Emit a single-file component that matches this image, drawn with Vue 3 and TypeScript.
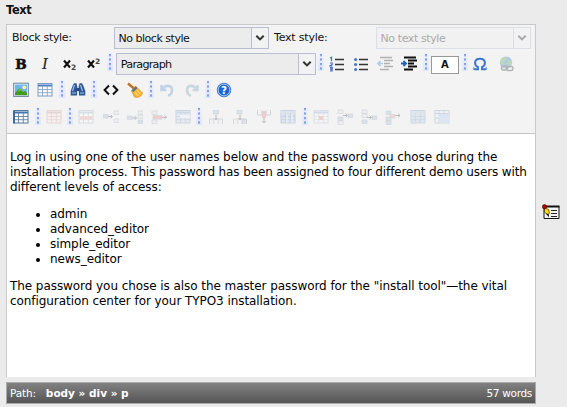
<script setup lang="ts">
interface Tool { name: string; off?: boolean }

const table = (head: string, line: string, fill: string) =>
  `<rect x="1" y="1.5" width="14" height="12.5" fill="${fill}" stroke="${line}"/><path d="M1 2.5h14v2H1z" fill="${head}"/><path d="M1 7.5h14M1 10.7h14M5.5 4v10M10.3 4v10" stroke="${line}" stroke-width=".8" fill="none"/>`

const box = (x: number, y: number, color = '#a9bfdd', w = 5) =>
  `<rect x="${x}" y="${y}" width="${w}" height="3.6" fill="${color}" stroke="#8c9bb0" stroke-width=".6"/>`

const arrow = (x: number, y: number) =>
  `<path d="M${x} ${y}h4.5m-2-1.8 2 1.8-2 1.8" stroke="#555" fill="none"/>`

const down = '<path d="M8 6v5m-1.8-2L8 11l1.8-2" stroke="#555" fill="none"/>'

const icons: Record<string, string> = {
  bold: '<text x="8" y="12.7" text-anchor="middle" font-family="DejaVu Serif,serif" font-weight="700" font-size="13.5" fill="#111" stroke="#111" stroke-width=".6">B</text>',
  italic: '<text x="8" y="12.7" text-anchor="middle" font-family="DejaVu Serif,serif" font-style="italic" font-size="14" fill="#222" stroke="#222" stroke-width=".2">I</text>',
  sub: '<path d="m2 4.5 6 7m0-7-6 7" stroke="#111" stroke-width="2.1"/><text x="9" y="14" font-family="DejaVu Sans,sans-serif" font-size="7.5" font-weight="700" fill="#444">2</text>',
  sup: '<path d="m2 4.5 6 7m0-7-6 7" stroke="#111" stroke-width="2.1"/><text x="9" y="8" font-family="DejaVu Sans,sans-serif" font-size="7.5" font-weight="700" fill="#444">2</text>',
  ordered: '<path d="M6 3.5h9M6 8.5h9M6 13.5h9" stroke="#333" stroke-width="1.4"/><path d="M1 2l1.5-.7v4M1 7h2.2v1.2L1 10h2.5M1 11.6h2.2v3.2H1m0-1.6h2" stroke="#4773c4" stroke-width="1.2" fill="none"/>',
  bullets: '<path d="M6 3.5h9M6 8.5h9M6 13.5h9" stroke="#333" stroke-width="1.4"/><g fill="#4773c4"><circle cx="2.6" cy="3.5" r="1.5"/><circle cx="2.6" cy="8.5" r="1.5"/><circle cx="2.6" cy="13.5" r="1.5"/></g>',
  outdent: '<path d="M3 1.5h12M7 4.5h9M7 7.5h6M7 10.5h9M3 13.5h9" stroke="#333" stroke-width="1.5"/><path d="M6 7.5H1M3.5 5 1 7.5 3.5 10" stroke="#2f83c9" stroke-width="1.7" fill="none"/>',
  indent: '<path d="M3 1.5h12M7 4.5h9M7 7.5h6M7 10.5h9M3 13.5h9" stroke="#111" stroke-width="1.8"/><path d="M0 7.5h5M2.5 5 5 7.5 2.5 10" stroke="#2261bd" stroke-width="1.8" fill="none"/>',
  omega: '<path d="M2 13.2h4v-2C1.800 9 1.800 2.800 8 2.800s6.200 6.200 2 8.400v2h4" fill="none" stroke="#3f76d0" stroke-width="2"/><path d="M1.700 14v-3M14.300 14v-3" stroke="#5d93e4" stroke-width="1"/>',
  globe: '<circle cx="8" cy="6.600" r="6.200" fill="#72a9d5"/><path d="M4 2q4-2 5 1L6 5l1 3-3 1-2-3zm7 2 3 2-2 4-3-2z" fill="#8ac078"/><rect x="3.500" y="10" width="6" height="4" rx="2" fill="none" stroke="#777" stroke-width="1.400"/><rect x="8.500" y="10.500" width="6.500" height="4" rx="2" fill="none" stroke="#777" stroke-width="1.400"/>',
  image: '<rect x=".7" y="1.2" width="14.6" height="13.2" fill="#f5faff" stroke="#6b8295"/><path d="M2 2.5h12v10.7H2z" fill="#6eb5ed"/><circle cx="11.3" cy="5.3" r="1.9" fill="#fff2a0"/><path d="M2 11l4.5-5 4 4 1.5-1 2 2v2.2H2z" fill="#419a1e"/><path d="m6.5 6 3 3.5-3-1-2 2z" fill="#77c43c"/>',
  table: table('#4f7ec4', '#7c9ebf', '#f7fbff'),
  find: '<path d="M2.5 4 4 1.3h2.5L7.4 5 7 13.5H.7V9zM13.5 4 12 1.3H9.5L8.6 5 9 13.5h6.3V9z" fill="#305b99"/><path d="M6 6h4v3H6z" fill="#274b84"/><path d="M4.5 3 2.5 9m8-6 2 6" stroke="#9bbbe3" stroke-width="1.2"/><path d="M2 11h4m4 0h4" stroke="#7ca1d0" stroke-width="1.3"/>',
  code: '<path d="M6 3.5 1.6 8 6 12.5m4-9L14.4 8 10 12.5" fill="none" stroke="#111" stroke-width="2"/>',
  broom: '<path d="m1 1.500 6 5" stroke="#bd7429" stroke-width="2.500"/><path d="m8.500 4-4 5 3 6c4 1 7-.5 8-4z" fill="#f5b536" stroke="#d48b23" stroke-width=".7"/><path d="m8.500 4.500-4 4 2 1.500 4-4z" fill="#56758a"/><path d="m8 10 3 4m-1-6 3 4" stroke="#ffe38b"/>',
  undo: '<path d="M2.5 3v5h5M3 8c3-6 10-5 10 .2 0 3-2 5-4 5.3" stroke="#6997cf" stroke-width="2.6" fill="none"/>',
  redo: '<path d="M13.5 3v5h-5M13 8C10 2 3 3 3 8.2c0 3 2 5 4 5.3" stroke="#7ba3b8" stroke-width="2.6" fill="none"/>',
  help: '<circle cx="8" cy="8" r="6.8" fill="#1e67d0" stroke="#3d78c5"/><circle cx="8" cy="8" r="5.9" fill="none" stroke="#b9d8ff" stroke-width=".9"/><text x="8" y="11.8" text-anchor="middle" font-family="DejaVu Sans,sans-serif" font-size="10.5" font-weight="700" fill="#fff">?</text>',
  grid: table('#4773af', '#55779a', '#f7fbff') + '<path d="M1 1.5v13" stroke="#365f91" stroke-width="1.7"/>',
  redgrid: table('#c3a4a4', '#cba5a1', '#ffe9e5'),
  row: table('#9fb6ce', '#a8b5c2', '#fff') + '<path d="M2 7.3h12v3.3H2z" fill="#eaa39f"/>',
  rowBefore: box(0, 5.5) + arrow(5, 7.5) + box(11, 2, '#e4e4e4') + box(11, 10, '#e4e4e4'),
  rowAfter: box(0, 7) + arrow(5, 9) + box(11, 2, '#e4e4e4') + box(11, 6, '#e4e4e4') + box(11, 11),
  rowDelete: box(1, 2, '#e4e4e4') + box(1, 11, '#e4e4e4') + box(2, 6.5, '#e28883', 9) + arrow(11, 8.3),
  rowSplit: table('#87a8cf', '#879eb9', '#cbdcf1') + '<path d="M5 6h10v3H5z" fill="#e8f3ff"/>',
  colBefore: box(5.5, 1.5) + down + '<path d="M1.5 15v-5H6v5m4 0v-5h4.5v5" fill="#e8edf1" stroke="#8c9bb0" stroke-width=".8"/>',
  colAfter: box(5, 1.5) + down + '<path d="M1.5 15v-5H6v5" fill="#e8edf1" stroke="#999" stroke-width=".8"/><path d="M10 15v-5h4.5v5" fill="#a9bfdd" stroke="#8c9bb0"/>',
  colDelete: '<path d="M1.5 1v5H6V1m4 0v5h4.5V1" fill="#edf2f7" stroke="#8c9bb0"/><path d="M6 2h4v7H6z" fill="#db8782"/><path d="M8 9v5m-2-2 2 2 2-2" stroke="#555" fill="none"/>',
  columns: table('#b6c9dc', '#7995bd', '#b1caee') + '<path d="M7 5v9m5-9v9" stroke="#edf5ff"/>',
  cell: table('#8eafd9', '#b0bdca', '#f8fbff') + '<path d="M6 7h4v4H6z" fill="#e28e89"/>',
  cellBefore: box(1, 1, '#e4e4e4') + box(1, 8) + box(1, 12, '#e4e4e4') + arrow(6, 6.5) + box(11, 5),
  cellAfter: box(1, 1, '#e4e4e4') + box(1, 5, '#e4e4e4') + box(1, 11) + arrow(6, 8.5) + box(11, 7),
  cellDelete: box(1, 2) + box(5, 5.5, '#e4a39e') + box(1, 8) + box(1, 12) + arrow(10.5, 6.5),
  cells: table('#b7cada', '#88a3bd', '#bed1ec'),
  merged: '<rect x="1" y="1.5" width="14" height="12.500" fill="#edf5ff" stroke="#88a3bd"/><path d="M1 4.500h14M5 2v12M10 2v2M1 9h4" stroke="#88a3bd" fill="none"/><path d="M5.500 5h9v8.500h-9z" fill="#b5cdf1"/>',
}

const on = (...names: string[]): Tool[] => names.map(name => ({ name }))
const off = (...names: string[]): Tool[] => names.map(name => ({ name, off: true }))

const rows: Tool[][] = [
  [...on('image', 'table', '|', 'find', '|', 'code', 'broom', '|'), ...off('undo', 'redo'), ...on('|', 'help')],
  [...on('grid', '|'), ...off('redgrid'), ...on('|'), ...off('row', 'rowBefore', 'rowAfter', 'rowDelete', 'rowSplit'), ...on('|'), ...off('colBefore', 'colAfter', 'colDelete', 'columns'), ...on('|'), ...off('cell', 'cellBefore', 'cellAfter', 'cellDelete', 'cells', 'merged')],
]
const formats = on('bold', 'italic', 'sub', 'sup')
const lists: Tool[] = [...on('ordered', 'bullets'), ...off('outdent'), ...on('indent')]
const users = ['admin', 'advanced_editor', 'simple_editor', 'news_editor']
</script>

<template>
  <main class="page">
    <h1>Text</h1>
    <div class="field">
      <section class="editor">
        <div class="toolbar">
          <div class="styles">
            <label class="block-label">Block style:</label>
            <div class="select"><span>No block style</span><i><svg viewBox="0 0 10 8"><path d="m1.3 1.8 3.7 3.6 3.7-3.6" /></svg></i></div>
            <label class="text-label">Text style:</label>
            <div class="select disabled"><span>No text style</span><i><svg viewBox="0 0 10 8"><path d="m1.3 1.8 3.7 3.6 3.7-3.6" /></svg></i></div>
          </div>
          <div class="tools formatting">
            <span v-for="t in formats" :key="t.name" class="tool"><svg viewBox="0 0 16 16" v-html="icons[t.name]" /></span>
            <span class="sep" />
            <div class="select paragraph"><span>Paragraph</span><i><svg viewBox="0 0 10 8"><path d="m1.3 1.8 3.7 3.6 3.7-3.6" /></svg></i></div>
            <span class="sep" />
            <span v-for="t in lists" :key="t.name" class="tool" :class="{ off: t.off }"><svg viewBox="0 0 16 16" v-html="icons[t.name]" /></span>
            <span class="sep" />
            <span class="acronym">A</span>
            <span class="sep" />
            <span class="tool omega"><svg viewBox="0 0 16 16" v-html="icons.omega" /></span>
            <span class="tool link"><svg viewBox="0 0 16 16" v-html="icons.globe" /></span>
          </div>
          <div v-for="(row, r) in rows" :key="r" class="tools">
            <template v-for="(t, n) in row" :key="n">
              <span v-if="t.name === '|'" class="sep" />
              <span v-else class="tool" :class="{ off: t.off }"><svg viewBox="0 0 16 16" v-html="icons[t.name]" /></span>
            </template>
          </div>
        </div>
        <article class="content">
          <p>Log in using one of the user names below and the password you chose during the<br><span class="tight">installation process. This password has been assigned to four different demo users with</span><br>different levels of access:</p>
          <ul><li v-for="u in users" :key="u">{{ u }}</li></ul>
          <p>The password you chose is also the master password for the "install tool"—the vital<br>configuration center for your TYPO3 installation.</p>
        </article>
      </section>
      <svg class="wizard" viewBox="0 0 18 16">
        <path d="M2 2.500h15v12H2z" fill="#f4f4f4" stroke="#111" />
        <path d="M2 1.500h15.500v2H2z" fill="#111" />
        <path d="M9 6.500h6M9 9.500h6M9 12.500h6" stroke="#222" />
        <path d="m2.500 4 4 1.500 1 3.500-2 2-3-3z" fill="#ffe000" stroke="#302800" stroke-width=".7" />
        <path d="m4 9 2.500 4.500.5-3z" fill="#111" />
        <circle cx="2.500" cy="2.700" r="2.200" fill="#b50000" stroke="#300" stroke-width=".5" />
      </svg>
    </div>
    <footer><span>Path:</span><b>body » div » p</b><span class="count">57 words</span></footer>
  </main>
</template>

<style>
body { background: #ebebeb; }
</style>
<style scoped>
.page { box-sizing: border-box; width: 567px; height: 407px; padding: 3px 0 0 6px; overflow: hidden; background: #ebebeb; color: #111; font-family: Verdana, "DejaVu Sans", sans-serif; }
h1 { margin: 0; height: 21px; font-size: 11.4px; line-height: 15px; letter-spacing: -.35px; }
.field { display: flex; align-items: center; }
.editor { box-sizing: border-box; width: 530px; height: 353px; border: 1px solid #c9c9c9; border-bottom: 0; background: #fff; }
.toolbar { box-sizing: border-box; height: 109px; padding-top: 2px; background: #f3f3f3; border-bottom: 1px solid #c5c5c5; }
.styles { display: flex; height: 26px; font-size: 11px; letter-spacing: -.3px; }
.styles label { box-sizing: border-box; padding-top: 3px; line-height: 15px; white-space: nowrap; }
.block-label { width: 107px; padding-left: 5px; }
.text-label { width: 107px; padding-left: 5px; letter-spacing: -.2px; }
.select { box-sizing: border-box; display: flex; flex: none; width: 155px; height: 22px; border: 1px solid #b9bfd0; background: #ececec; font-size: 11px; line-height: 21px; letter-spacing: -.48px; }
.select span { flex: 1; padding-left: 3.5px; white-space: nowrap; }
.select i { box-sizing: border-box; display: flex; align-items: center; justify-content: center; width: 17px; border-left: 1px solid #b9bfd0; background: #f2f2f2; }
.select i svg { width: 10px; height: 8px; fill: none; stroke: #333; stroke-width: 2.1; }
.select.disabled { color: #aaa; border-color: #dddfe7; background: #f1f1f1; letter-spacing: -.4px; }
.disabled i { border-color: #dddfe7; }
.disabled i svg { stroke: #aaa; }
.tools { display: flex; align-items: center; height: 26.5px; padding-left: 2.2px; }
.formatting { height: 24px; align-items: flex-start; }
.formatting .tool, .formatting .sep { height: 22px; }
.tool { display: flex; flex: none; align-items: center; justify-content: center; width: 24.2px; height: 22px; }
.tool svg { width: 16px; height: 16px; }
.off { opacity: .34; }
.sep { display: flex; flex: none; justify-content: center; width: 8.4px; height: 20px; }
.sep::before { content: ""; width: 6px; height: 18px; background: radial-gradient(circle at 3px 2px, #829ce6 1px, transparent 1.5px) 0 0 / 6px 4.5px, linear-gradient(#f0f2fa, #dfe7fc); }
.paragraph { width: 200px; margin-left: 2px; letter-spacing: -.75px; }
.paragraph { font-size: 11.2px; }
.acronym { box-sizing: border-box; width: 28px; height: 18px; margin: 3px 2px 0 1px; border: 1px solid #999; background: #fff; text-align: center; font-size: 10px; font-weight: bold; line-height: 16px; }
.omega { margin-left: -1px; }
.link { margin-left: 1px; opacity: .5; }
.content { padding: 16px 0 0 3px; color: #000; font-size: 12px; line-height: 15px; letter-spacing: -.065px; white-space: nowrap; }
.content p { margin: 0 0 12px; }
.content ul { margin: 0 0 12px; padding-left: 40px; }
.tight { letter-spacing: -.12px; }
.wizard { width: 18px; height: 16px; margin: 22px 0 0 6px; }
footer { box-sizing: border-box; display: flex; width: 530px; height: 22px; margin-top: 5px; padding: 0 3px; border: 1px solid #aaa; background: linear-gradient(#818181, #555); color: #fff; font-size: 10.5px; line-height: 20px; letter-spacing: -.15px; white-space: nowrap; }
footer b { margin-left: 10px; letter-spacing: 0; }
.count { margin-left: auto; letter-spacing: -.3px; }
</style>
